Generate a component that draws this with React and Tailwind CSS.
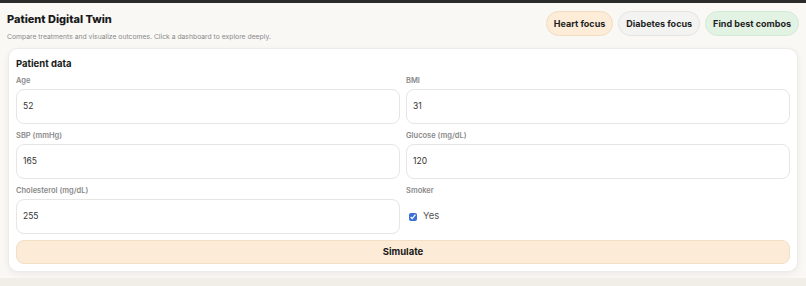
import React from "react";

function Field({ label, value }) {
  return (
    <div className="flex flex-col">
      <div className="h-[11px] text-[7.5px] font-semibold leading-[11px] text-[#8a8a8a]">{label}</div>
      <div className="mt-[3px] flex h-[35px] items-center rounded-[8px] border border-[#e6e6e4] bg-white px-[6px] text-[8.5px] text-[#333]">
        {value}
      </div>
    </div>
  );
}

export default function App() {
  return (
    <div className="flex min-h-[286px] w-full flex-col bg-[#f9f8f5]" style={{ fontFamily: "Inter, 'Noto Sans', sans-serif" }}>
      <div className="h-[3px] bg-[#2b2b2b]" />
      <div className="flex items-start justify-between px-[7px] pt-[8px]">
        <div className="flex flex-col">
          <div className="text-[11px] font-extrabold leading-[16px] text-[#1a1a1a]">Patient Digital Twin</div>
          <div className="mt-[5px] text-[6.8px] leading-[10px] text-[#8a8a8a]">
            Compare treatments and visualize outcomes. Click a dashboard to explore deeply.
          </div>
        </div>
        <div className="flex gap-[5px]">
          <button className="h-[25px] rounded-full border border-[#f1dcc0] bg-[#fcecd8] px-[7px] text-[9px] font-bold text-[#1f1f1f]">Heart focus</button>
          <button className="h-[25px] rounded-full border border-[#e4e4e2] bg-[#f3f3f1] px-[7px] text-[9px] font-bold text-[#1f1f1f]">Diabetes focus</button>
          <button className="h-[25px] rounded-full border border-[#d3ead6] bg-[#e2f3e4] px-[7px] text-[9px] font-bold text-[#1f1f1f]">Find best combos</button>
        </div>
      </div>
      <div className="mx-[8px] mt-[6px] rounded-[10px] border border-[#ecebe8] bg-white px-[7px] pb-[7px] pt-[8px] shadow-[0_2px_6px_rgba(0,0,0,0.06)]">
        <div className="text-[9.5px] font-bold leading-[14px] text-[#1a1a1a]">Patient data</div>
        <div className="mt-[4px] grid grid-cols-2 gap-x-[6px] gap-y-[6px]">
          <Field label="Age" value="52" />
          <Field label="BMI" value="31" />
          <Field label="SBP (mmHg)" value="165" />
          <Field label="Glucose (mg/dL)" value="120" />
          <Field label="Cholesterol (mg/dL)" value="255" />
          <div className="flex flex-col">
            <div className="h-[11px] text-[7.5px] font-semibold leading-[11px] text-[#8a8a8a]">Smoker</div>
            <div className="mt-[3px] flex h-[35px] items-center gap-[6px] pl-[3px]">
              <input type="checkbox" defaultChecked className="h-[8px] w-[8px] accent-[#3b6fd6]" />
              <span className="text-[9.5px] text-[#555]">Yes</span>
            </div>
          </div>
        </div>
        <button className="mt-[6px] flex h-[24px] w-full items-center justify-center rounded-[8px] border border-[#f2dfc6] bg-[#fbebd7] text-[9.5px] font-bold text-[#1a1a1a]">
          Simulate
        </button>
      </div>
      <div className="mt-[6px] flex-1 bg-[#f1eee8]" />
    </div>
  );
}
